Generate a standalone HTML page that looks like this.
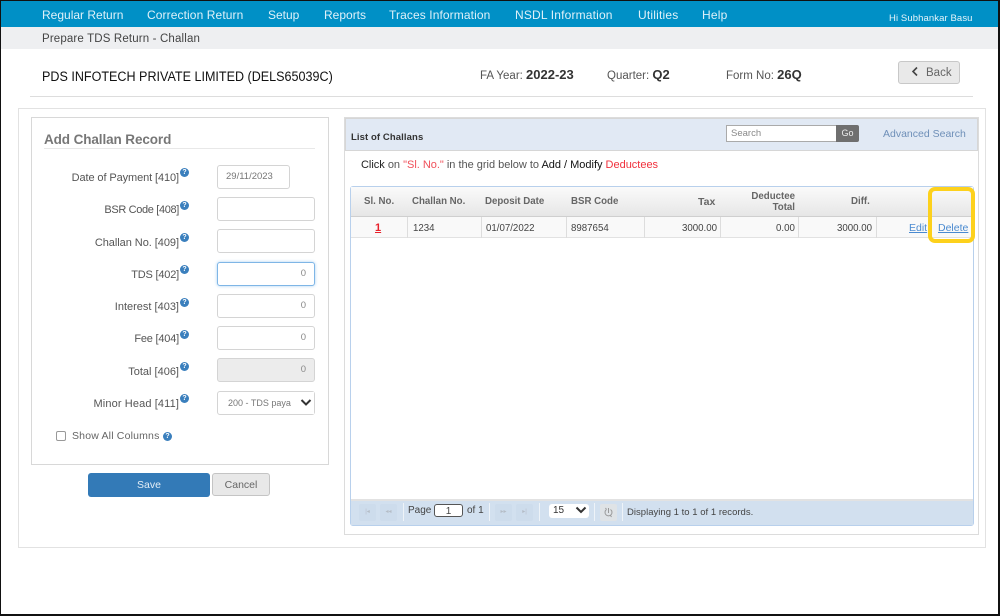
<!DOCTYPE html>
<html><head><meta charset="utf-8"><style>
html,body{margin:0;padding:0;background:#fff}
#p{position:relative;width:1000px;height:616px;overflow:hidden;background:#fff;font-family:"Liberation Sans",sans-serif;color:#444;filter:blur(.25px)}
#p div,#p span.a,#p a{position:absolute;box-sizing:border-box;white-space:nowrap}
.n{top:7px;font-size:12px;line-height:16px;color:#dff1f9}
.l{right:821px;font-size:11px;line-height:14px;color:#555;text-align:right}
.q{width:9px;height:9px;border-radius:50%;background:#3a7fbd;color:#fff;font-size:7px;line-height:9px;text-align:center;font-weight:bold}
.i{left:217px;width:98px;height:24px;border:1px solid #d4d4d4;border-radius:3px;background:#fff;font-size:9.5px;line-height:22px;text-align:right;padding-right:8px;color:#888}
.th{top:196px;font-size:9.7px;line-height:12px;font-weight:bold;color:#666}
.td{top:223px;font-size:9.7px;line-height:12px;color:#444}
.v{top:217px;height:21px;width:1px;background:#ddd}
.pb{top:504px;width:17px;height:17px;background:#cddcec;border-radius:2px;color:#b4bcc6;font-size:6px;line-height:17px;text-align:center}
.sep{top:503px;width:1px;height:18px;background:#eef3f8}
</style></head><body><div id="p">
<div style="left:0;top:0;width:1000px;height:27px;background:#0090c6"></div>
<div style="left:0;top:27px;width:1000px;height:22px;background:#eeeff1"></div>
<div class="n" style="left:42px;">Regular Return</div>
<div class="n" style="left:147px;letter-spacing:.1px">Correction Return</div>
<div class="n" style="left:268px">Setup</div>
<div class="n" style="left:324px">Reports</div>
<div class="n" style="left:389px;letter-spacing:.1px">Traces Information</div>
<div class="n" style="left:515px;letter-spacing:.17px">NSDL Information</div>
<div class="n" style="left:638px;letter-spacing:.2px">Utilities</div>
<div class="n" style="left:702px;letter-spacing:.2px">Help</div>
<div style="left:889px;top:12px;font-size:9.5px;line-height:14px;color:#e6f4fa;letter-spacing:.1px">Hi Subhankar Basu</div>
<div style="left:42px;top:31px;font-size:11.5px;line-height:16px;color:#444;letter-spacing:.15px">Prepare TDS Return - Challan</div>

<div style="left:42px;top:68px;font-size:13.5px;line-height:18px;color:#111;transform:scaleX(.931);transform-origin:0 0">PDS INFOTECH PRIVATE LIMITED (DELS65039C)</div>
<div style="left:480px;top:67px;font-size:11.5px;line-height:15px;color:#555">FA Year: <b style="color:#333;font-size:13px">2022-23</b></div>
<div style="left:607px;top:67px;font-size:11.5px;line-height:15px;color:#555">Quarter: <b style="color:#333;font-size:13px">Q2</b></div>
<div style="left:726px;top:67px;font-size:11.5px;line-height:15px;color:#555">Form No: <b style="color:#333;font-size:13px">26Q</b></div>
<div style="left:898px;top:61px;width:62px;height:23px;background:#e9e9e9;border:1px solid #c8c8c8;border-radius:3px"></div>
<svg style="position:absolute;left:911px;top:66px" width="8" height="11"><path d="M6 1.500 L2 5.500 L6 9.500" fill="none" stroke="#444" stroke-width="1.600"/></svg>
<div style="left:926px;top:66px;font-size:11.5px;line-height:15px;color:#666">Back</div>
<div style="left:30px;top:96px;width:943px;height:1px;background:#ddd"></div>

<div style="left:18px;top:108px;width:968px;height:440px;border:1px solid #e2e2e2"></div>

<!-- left panel -->
<div style="left:31px;top:117px;width:298px;height:348px;border:1px solid #d8d8d8"></div>
<div style="left:44px;top:131px;font-size:13.5px;line-height:17px;font-weight:bold;color:#777;letter-spacing:-.1px">Add Challan Record</div>
<div style="left:44px;top:148px;width:271px;height:1px;background:#e8e8e8"></div>

<div class="l" style="top:171px;letter-spacing:-.1px">Date of Payment [410]</div><div class="q" style="left:180px;top:168px">?</div>
<div class="i" style="left:217px;top:165px;width:73px;text-align:left;padding-left:8px;color:#777">29/11/2023</div>
<div class="l" style="top:203px;letter-spacing:-.35px">BSR Code [408]</div><div class="q" style="left:180px;top:201px">?</div>
<div class="i" style="top:197px"></div>
<div class="l" style="top:236px;letter-spacing:-.05px">Challan No. [409]</div><div class="q" style="left:180px;top:233px">?</div>
<div class="i" style="top:229px"></div>
<div class="l" style="top:268px;letter-spacing:-.2px">TDS [402]</div><div class="q" style="left:180px;top:265px">?</div>
<div class="i" style="top:262px;border-color:#7fb6e6;box-shadow:0 0 3px #a8d0f2">0</div>
<div class="l" style="top:300px">Interest [403]</div><div class="q" style="left:180px;top:298px">?</div>
<div class="i" style="top:294px">0</div>
<div class="l" style="top:332px;letter-spacing:-.2px">Fee [404]</div><div class="q" style="left:180px;top:330px">?</div>
<div class="i" style="top:326px">0</div>
<div class="l" style="top:365px">Total [406]</div><div class="q" style="left:180px;top:362px">?</div>
<div class="i" style="top:358px;background:#ececec">0</div>
<div class="l" style="top:397px;letter-spacing:.12px">Minor Head [411]</div><div class="q" style="left:180px;top:394px">?</div>
<div class="i" style="top:391px;text-align:left;padding-left:10px;overflow:hidden;color:#777;font-size:9px">200 - TDS paya</div>
<div style="left:297px;top:392px;width:17px;height:22px;background:#fff"></div>
<svg style="position:absolute;left:300px;top:398px" width="12" height="9"><path d="M1.500 2 L6 6.500 L10.500 2" fill="none" stroke="#333" stroke-width="2"/></svg>
<div style="left:56px;top:431px;width:10px;height:10px;border:1px solid #999;border-radius:2px;background:#fff"></div>
<div style="left:72px;top:429px;font-size:10.5px;line-height:14px;color:#666;letter-spacing:.18px">Show All Columns</div>
<div class="q" style="left:163px;top:432px">?</div>

<div style="left:88px;top:473px;width:122px;height:24px;background:#337ab7;border-radius:3px;color:#e4eef6;font-size:10.5px;line-height:25px;text-align:center">Save</div>
<div style="left:212px;top:473px;width:58px;height:23px;background:#e8e8e8;border:1px solid #c4c4c4;border-radius:3px;color:#666;font-size:10.5px;line-height:23px;text-align:center">Cancel</div>

<!-- right panel -->
<div style="left:344px;top:117px;width:635px;height:418px;border:1px solid #dcdcdc;background:#fff"></div>
<div style="left:345px;top:118px;width:633px;height:33px;background:#e1e9f4;border:1px solid #d6d6d6"></div>
<div style="left:351px;top:131px;font-size:9.5px;line-height:13px;font-weight:bold;color:#333;letter-spacing:.1px">List of Challans</div>
<div style="left:726px;top:125px;width:111px;height:17px;background:#fff;border:1px solid #aaa;font-size:9.5px;line-height:15px;padding-left:4px;color:#888">Search</div>
<div style="left:836px;top:125px;width:23px;height:17px;background:#6f6f6f;border-radius:0 2px 2px 0;color:#eee;font-size:9px;line-height:17px;text-align:center">Go</div>
<div style="left:883px;top:127px;font-size:10.5px;line-height:14px;color:#6e8fb8">Advanced Search</div>

<div style="left:361px;top:158px;font-size:11px;line-height:14px;color:#222;letter-spacing:-.01px">Click <span style="color:#555">on</span> <span style="color:#f0505a">"Sl. No."</span> <span style="color:#555">in the grid below to</span> <span style="color:#111">Add / Modify</span> <span style="color:#f0303c">Deductees</span></div>

<div style="left:350px;top:186px;width:624px;height:340px;border:1px solid #b8d0ec;border-radius:3px;background:#fff"></div>
<div style="left:351px;top:187px;width:622px;height:30px;background:linear-gradient(#fafafa,#e6e6e6);border-bottom:1px solid #cfcfcf"></div>
<div style="left:351px;top:217px;width:622px;height:21px;background:#f9f9f9;border-bottom:1px solid #e2e2e2"></div>
<div class="th" style="left:364px">Sl. No.</div>
<div class="th" style="left:412px">Challan No.</div>
<div class="th" style="left:485px">Deposit Date</div>
<div class="th" style="left:571px">BSR Code</div>
<div class="th" style="left:698px;font-size:10.5px">Tax</div>
<div class="th" style="left:751px;top:191px;width:44px;text-align:right;line-height:11px">Deductee<br>Total</div>
<div class="th" style="left:851px">Diff.</div>
<div class="v" style="left:407px"></div><div class="v" style="left:481px"></div><div class="v" style="left:566px"></div><div class="v" style="left:644px"></div><div class="v" style="left:720px"></div><div class="v" style="left:798px"></div><div class="v" style="left:876px"></div>
<div class="td" style="left:375px;top:222px;font-weight:bold;color:#e8202a;font-size:11px;text-decoration:underline">1</div>
<div class="td" style="left:413px">1234</div>
<div class="td" style="left:486px">01/07/2022</div>
<div class="td" style="left:571px">8987654</div>
<div class="td" style="left:682px">3000.00</div>
<div class="td" style="left:776px">0.00</div>
<div class="td" style="left:837px">3000.00</div>
<div class="td" style="left:909px;top:222px;font-size:10.5px;color:#4a8ad0;text-decoration:underline">Edit</div>
<div class="td" style="left:938px;top:222px;font-size:10.5px;color:#4a8ad0;text-decoration:underline">Delete</div>
<div style="left:928px;top:187px;width:47px;height:56px;border:4px solid #fdd11c;border-radius:7px"></div>

<!-- pager -->
<div style="left:351px;top:499px;width:622px;height:2px;background:#e2e2e2"></div>
<div style="left:351px;top:501px;width:622px;height:24px;background:#d2e0ef"></div>
<div class="pb" style="left:359px">|◂</div><div class="pb" style="left:380px">◂◂</div>
<div class="sep" style="left:403px"></div>
<div style="left:408px;top:504px;font-size:10px;line-height:13px;color:#444">Page</div>
<div style="left:434px;top:504px;width:29px;height:13px;border:1px solid #555;border-radius:3px;background:#fff;font-size:10px;line-height:13px;text-align:center;color:#444">1</div>
<div style="left:467px;top:504px;font-size:10px;line-height:13px;color:#444">of 1</div>
<div class="sep" style="left:489px"></div>
<div class="pb" style="left:495px">▸▸</div><div class="pb" style="left:516px">▸|</div>
<div class="sep" style="left:539px"></div>
<div style="left:549px;top:504px;width:40px;height:14px;background:#fff;border-radius:3px;font-size:10px;line-height:14px;padding-left:4px;color:#333">15</div>
<svg style="position:absolute;left:575px;top:506px" width="12" height="9"><path d="M1.500 1.500 L6 6 L10.500 1.500" fill="none" stroke="#333" stroke-width="2"/></svg>
<div class="sep" style="left:594px"></div>
<div style="left:600px;top:504px;width:17px;height:17px;background:#dfe3e6;border-radius:2px"></div>
<svg style="position:absolute;left:603px;top:507px" width="11" height="11"><path d="M3.500 2.500 A3.500 3.500 0 1 0 7.500 2.500 M5.500 1 V6 M3.500 2.500 L2.500 1 M7.500 8.500 L8.500 10" fill="none" stroke="#999" stroke-width="1"/></svg>
<div class="sep" style="left:622px"></div>
<div style="left:627px;top:506px;font-size:9.5px;line-height:13px;color:#444;letter-spacing:.02px">Displaying 1 to 1 of 1 records.</div>

<!-- black frame -->
<div style="left:0;top:0;width:1000px;height:1px;background:#111"></div>
<div style="left:0;top:0;width:1px;height:616px;background:#111"></div>
<div style="left:998px;top:0;width:2px;height:616px;background:#111"></div>
<div style="left:0;top:614px;width:1000px;height:2px;background:#111"></div>
</div></body></html>
